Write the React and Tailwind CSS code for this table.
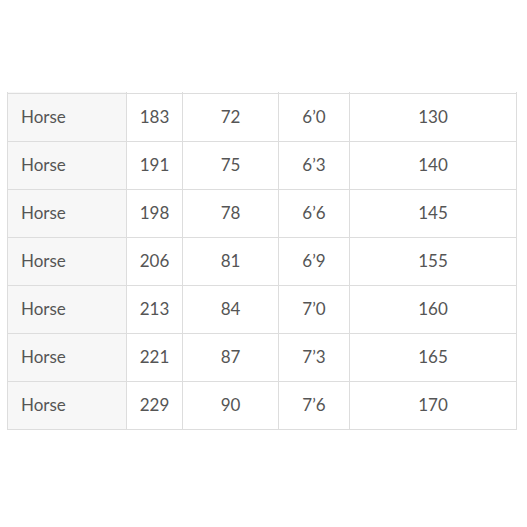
const rows = [
  ["183", "72", "6’0", "130"],
  ["191", "75", "6’3", "140"],
  ["198", "78", "6’6", "145"],
  ["206", "81", "6’9", "155"],
  ["213", "84", "7’0", "160"],
  ["221", "87", "7’3", "165"],
  ["229", "90", "7’6", "170"],
];

const cols = "grid grid-cols-[119px_56px_96px_71px_167px]";

export default function App() {
  return (
    <div className="min-h-[527px] w-[527px] bg-white pt-[92px] pl-[7px] font-['Lato','Liberation_Sans',sans-serif] text-[17px] text-[#555]">
      <div className="w-[510px] border-l border-[#ddd]">
        <div className={cols}>
          {[0, 1, 2, 3, 4].map((i) => (
            <div key={i} className={`h-[2px] border-r border-b border-[#ddd] ${i === 0 ? "bg-[#f7f7f7]" : ""}`} />
          ))}
        </div>
        {rows.map((r, idx) => (
          <div key={idx} className={cols}>
            <div className="flex h-[48px] items-center border-r border-b border-[#ddd] bg-[#f7f7f7] pb-[2px] pl-[13px]">
              Horse
            </div>
            {r.map((v, i) => (
              <div key={i} className="flex h-[48px] items-center justify-center border-r border-b border-[#ddd] pb-[2px]">
                {v}
              </div>
            ))}
          </div>
        ))}
      </div>
    </div>
  );
}
